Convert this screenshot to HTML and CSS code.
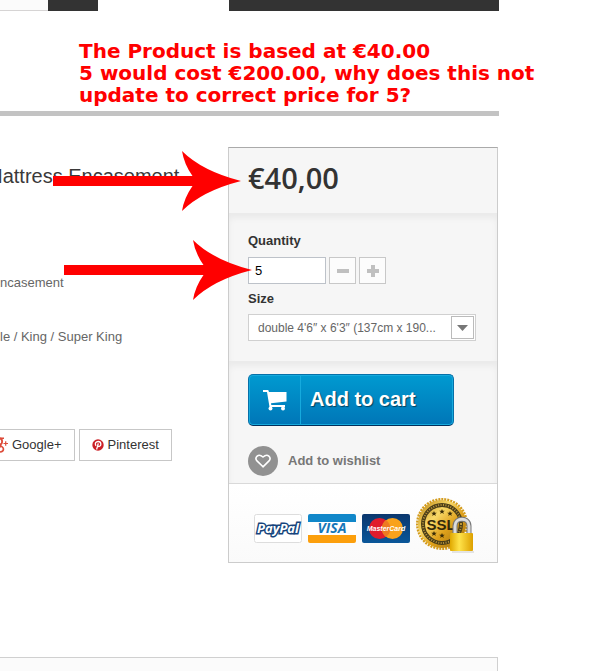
FILE: index.html
```html
<!DOCTYPE html>
<html lang="en">
<head>
    <meta charset="UTF-8">
    <meta name="viewport" content="width=device-width, initial-scale=1.0">
    <title>Mattress Encasement</title>
    <link rel="stylesheet" href="styles.css">
</head>
<body>
    <div class="page">
        <div class="topbar">
            <div class="tab-light"></div>
            <div class="tab-dark"></div>
            <div class="cart-bar"></div>
        </div>

        <p class="note">The Product is based at €40.00<br>5 would cost €200.00, why does this not<br>update to correct price for 5?</p>

        <main class="product">
            <section class="info">
                <h1>Mattress Encasement</h1>
                <p class="desc">ncasement</p>
                <p class="desc">le / King / Super King</p>
                <div class="share">
                    <button type="button" class="google">
                        <svg width="17" height="16" viewBox="0 0 17 16" fill="none" stroke="#dd4b39">
                            <ellipse cx="8.500" cy="4.500" rx="2.600" ry="3" stroke-width="1.800"/>
                            <path d="M9 1.200h4M9.500 7.500c-2 1 3 2 3 4.500 0 4-8 4-8 .8C4.500 10 8 9.600 10 9.600" stroke-width="1.600"/>
                            <path d="M12.500 6.500h4.500M14.700 4.300v4.400" stroke-width="1.200"/>
                        </svg>
                        Google+
                    </button>
                    <button type="button">
                        <svg width="12" height="12" viewBox="0 0 12 12" fill="none">
                            <circle cx="6" cy="6" r="5.700" fill="#cb2027"/>
                            <path d="M4 6.900C2.200 4.300 4.200 2.500 6.200 2.500c3.500 0 3.300 5 .6 5-.8 0-1.200-.5-1.200-.8M6.300 4.300L4.600 10.500" stroke="#fff" stroke-width="1.300"/>
                        </svg>
                        Pinterest
                    </button>
                </div>
            </section>

            <form class="buy-box">
                <div class="price">€40,00</div>
                <div class="options">
                    <label for="qty">Quantity</label>
                    <div class="qty-row">
                        <input type="text" id="qty" value="5">
                        <button type="button" aria-label="Decrease">
                            <svg width="12" height="12"><path d="M0 4h12v4H0z" fill="#c0c0c0"/></svg>
                        </button>
                        <button type="button" aria-label="Increase">
                            <svg width="12" height="12"><path d="M4 0h4v4h4v4H8v4H4V8H0V4h4z" fill="#c0c0c0"/></svg>
                        </button>
                    </div>
                    <label for="size">Size</label>
                    <div class="select-wrap">
                        <select id="size">
                            <option>double 4'6″ x 6'3″ (137cm x 190...</option>
                        </select>
                        <span class="select-arrow"><svg width="11" height="6"><path d="M0 0h11L5.500 6z" fill="#777"/></svg></span>
                    </div>
                </div>
                <div class="actions">
                    <button type="submit" class="add-cart">
                        <span class="cart-icon">
                            <svg width="24" height="21" viewBox="0 0 24 21" fill="#fff">
                                <path d="M0 0h5.200l.8 2H23.500v9.500L8 13.300l.3 1.700H22v2H6.500L4 2H0z"/>
                                <circle cx="7.500" cy="18.500" r="2"/>
                                <circle cx="20" cy="18.500" r="2"/>
                            </svg>
                        </span>
                        <span class="cart-label">Add to cart</span>
                    </button>
                    <a href="#" class="wishlist">
                        <span class="heart">
                            <svg width="16" height="14" viewBox="0 0 16 14" fill="none" stroke="#fff" stroke-width="1.600"><path d="M8 12.800L2 6.900C-.8 3.500 3.200-1.200 8 3c4.800-4.200 8.800.5 6 3.900z"/></svg>
                        </span>
                        Add to wishlist
                    </a>
                </div>
                <div class="payments">
                    <svg width="48" height="29" viewBox="0 0 48 29">
                        <rect x=".5" y=".5" width="47" height="28" rx="2" fill="#fff" stroke="#ddd"/>
                        <text x="24" y="19" text-anchor="middle" class="paypal-text">PayPal</text>
                    </svg>
                    <svg width="48" height="29" viewBox="0 0 48 29">
                        <rect width="48" height="29" rx="2" fill="#fff"/>
                        <path d="M0 8V2q0-2 2-2h44q2 0 2 2v6z" fill="#1187c9"/>
                        <path d="M0 21h48v6q0 2-2 2H2q-2 0-2-2z" fill="#fc9f0c"/>
                        <text x="24" y="19" text-anchor="middle" class="visa-text">VISA</text>
                    </svg>
                    <svg width="48" height="29" viewBox="0 0 48 29">
                        <defs>
                            <linearGradient id="navy" x2="0" y2="1"><stop stop-color="#0b376e"/><stop offset="1" stop-color="#0a5799"/></linearGradient>
                        </defs>
                        <rect width="48" height="29" rx="2" fill="url(#navy)"/>
                        <circle cx="17.500" cy="14.500" r="10.500" fill="#e01c2c"/>
                        <circle cx="30.500" cy="14.500" r="10.500" fill="#f9a21b"/>
                        <path d="M24 6a10.500 10.500 0 0 1 0 17 10.500 10.500 0 0 1 0-17z" fill="#ee7a22"/>
                        <text x="24" y="17" text-anchor="middle" class="mc-text">MasterCard</text>
                    </svg>
                    <svg class="ssl" width="60" height="58" viewBox="0 0 60 58">
                        <defs>
                            <linearGradient id="gold" x2="1" y2="1"><stop stop-color="#b57d0a"/><stop offset=".35" stop-color="#f9d968"/><stop offset=".6" stop-color="#dfa11c"/><stop offset="1" stop-color="#96670a"/></linearGradient>
                            <linearGradient id="lock"><stop stop-color="#e0a800"/><stop offset=".4" stop-color="#ffe34a"/><stop offset="1" stop-color="#dda000"/></linearGradient>
                        </defs>
                        <circle cx="26" cy="27" r="24.500" fill="none" stroke="#d39b1c" stroke-width="3" stroke-dasharray="2 1"/>
                        <circle cx="26" cy="27" r="24" fill="url(#gold)"/>
                        <circle cx="26" cy="27" r="19" fill="none" stroke="#4a3d18" stroke-width="4"/>
                        <circle cx="26" cy="27" r="19" fill="none" stroke="#b9963c" stroke-width="2" stroke-dasharray="1 1.500"/>
                        <g fill="#3a2c08">
                            <path id="star" d="M26 12l.8 1.800h2l-1.600 1.200.6 2-1.800-1.200-1.800 1.200.6-2-1.600-1.200h2z"/>
                            <use href="#star" x="-8" y="2"/>
                            <use href="#star" x="8" y="2"/>
                            <use href="#star" y="24"/>
                            <use href="#star" x="-8" y="22"/>
                        </g>
                        <text x="25" y="33" text-anchor="middle" class="ssl-text">SSL</text>
                        <path d="M39 36v-7c0-9 14-9 14 0v7" fill="none" stroke="#777" stroke-width="5"/>
                        <path d="M39 36v-7c0-9 14-9 14 0v7" fill="none" stroke="#ddd" stroke-width="3"/>
                        <rect x="34" y="36" width="23" height="18" rx="1" fill="url(#lock)"/>
                        <path d="M36 55h22" stroke="#ccc"/>
                    </svg>
                </div>
            </form>
        </main>

        <div class="panel"></div>

        <svg class="arrow arrow-price" width="189" height="60" viewBox="0 0 189 60"><path d="M0 25h139.500Q131 13 129 0q20 20 59 30-39 10-59 30 2-13 10.500-25H0z" fill="#f00"/></svg>
        <svg class="arrow arrow-qty" width="189" height="60" viewBox="0 0 189 60"><path d="M0 25h139.500Q131 13 129 0q20 20 59 30-39 10-59 30 2-13 10.500-25H0z" fill="#f00"/></svg>
    </div>
</body>
</html>
```

FILE: styles.css
```css
* {
    box-sizing: border-box;
}
body {
    margin: 0;
    background: #fff;
    color: #333;
    font: 13px/18px "Liberation Sans", Arial, sans-serif;
}
h1, p {
    margin: 0;
}
button, input, select {
    font: inherit;
    color: inherit;
    margin: 0;
    padding: 0;
}
.page {
    position: relative;
    display: flex;
    flex-direction: column;
    min-height: 100vh;
    padding-right: 110px;
    overflow: hidden;
}

/* header */
.topbar {
    display: grid;
    grid-template-columns: 48px 50px 1fr 270px;
    height: 11px;
}
.tab-light {
    background: #fbfbfb;
    border-bottom: 1px solid #d6d4d4;
}
.tab-dark {
    background: #333;
}
.cart-bar {
    grid-column: 4;
    background: #333;
}
.note {
    padding: 29px 0 5px 79px;
    border-bottom: 5px solid #c3c3c3;
    color: #f00;
    font: bold 20px/22px "DejaVu Sans", Verdana, sans-serif;
    white-space: nowrap;
}

/* product */
.product {
    display: grid;
    grid-template-columns: 1fr 270px;
    margin: 31px 1px 0 0;
}
.info {
    padding-top: 17px;
}
h1 {
    margin-bottom: 86px;
    text-indent: -14px;
    font-size: 20px;
    line-height: 24px;
    font-weight: normal;
    white-space: nowrap;
    color: #3a3939;
}
.desc {
    margin-bottom: 36px;
    color: #666;
}
.share {
    display: flex;
    gap: 4px;
    margin: 83px 0 0 -22px;
}
.share button {
    display: flex;
    align-items: center;
    gap: 4px;
    height: 32px;
    padding: 0 12px;
    border: 1px solid #c7c7c7;
    background: #fff;
}

/* buy box */
.buy-box {
    border: 1px solid #ccc;
    border-top-color: #aaa;
    background: #f6f6f6;
}
.price {
    height: 65px;
    padding: 10px 19px;
    font: 600 29px/40px "Open Sans", "Noto Sans", sans-serif;
}
.options, .actions {
    padding: 19px 19px 20px;
    box-shadow: inset 0 5px 6px rgba(0, 0, 0, 0.05);
}
.options label {
    display: block;
    font-weight: bold;
}
.qty-row {
    display: flex;
    gap: 3px;
    margin: 7px 0 6px;
}
.qty-row input {
    width: 78px;
    height: 27px;
    padding: 0 6px;
    border: 1px solid #bdc2c9;
    background: #fff;
    color: #000;
}
.qty-row button {
    display: grid;
    place-items: center;
    width: 27px;
    height: 27px;
    border: 1px solid #c8c8c8;
    background: #fcfcfc;
}
.select-wrap {
    position: relative;
    width: 228px;
    margin-top: 6px;
}
.select-wrap select {
    display: block;
    width: 100%;
    height: 27px;
    padding: 0 28px 0 9px;
    border: 1px solid #d0d0d0;
    border-radius: 0;
    appearance: none;
    background: #fff;
    color: #666;
    font-size: 12px;
}
.select-arrow {
    position: absolute;
    top: 2px;
    right: 2px;
    display: grid;
    place-items: center;
    width: 23px;
    height: 23px;
    border: 1px solid #bbb;
    background: #fff;
    pointer-events: none;
}
.actions {
    padding: 13px 19px 7px;
}
.add-cart {
    display: flex;
    width: 206px;
    height: 52px;
    border: 1px solid #0670a8;
    border-bottom-color: #012f5c;
    border-radius: 5px;
    background: linear-gradient(#009ad0, #0076b7);
    box-shadow: inset 0 0 0 1px #16aadd;
    color: #fff;
    text-shadow: 1px 1px 1px rgba(0, 0, 0, 0.5);
}
.cart-icon {
    display: grid;
    place-items: center;
    width: 52px;
    height: 50px;
    border-right: 1px solid #16aadd;
}
.cart-label {
    padding-left: 9px;
    font-size: 20px;
    line-height: 48px;
    font-weight: bold;
}
.wishlist {
    display: flex;
    align-items: center;
    gap: 10px;
    margin-top: 20px;
    color: #777;
    font-weight: bold;
    text-decoration: none;
}
.heart {
    display: grid;
    place-items: center;
    width: 30px;
    height: 30px;
    border-radius: 50%;
    background: #919191;
}
.payments {
    display: flex;
    align-items: center;
    gap: 6px;
    height: 79px;
    padding: 11px 0 0 25px;
    border-top: 1px solid #d9d9d9;
    background: linear-gradient(#fff, #fafafa);
}
.ssl {
    margin-top: -5px;
}
.paypal-text {
    font: italic bold 13px "Open Sans", sans-serif;
    fill: #fff;
    stroke: #16447c;
    stroke-width: 3px;
    paint-order: stroke;
}
.visa-text {
    font: italic bold 14px "Open Sans", sans-serif;
    fill: #1677b8;
}
.mc-text {
    font: italic bold 7px "Liberation Sans", sans-serif;
    fill: #fff;
}
.ssl-text {
    font: bold 15px "Liberation Sans", sans-serif;
    fill: #33290c;
}

/* next block */
.panel {
    flex: 1;
    margin-top: 94px;
    margin-right: 1px;
    border: 1px solid #d0d0d0;
    border-width: 1px 1px 0 0;
    background: #fbfbfb;
}

/* pointers over the page */
.arrow {
    position: absolute;
}
.arrow-price {
    top: 151px;
    left: 53px;
}
.arrow-qty {
    top: 240px;
    left: 64px;
}
```
